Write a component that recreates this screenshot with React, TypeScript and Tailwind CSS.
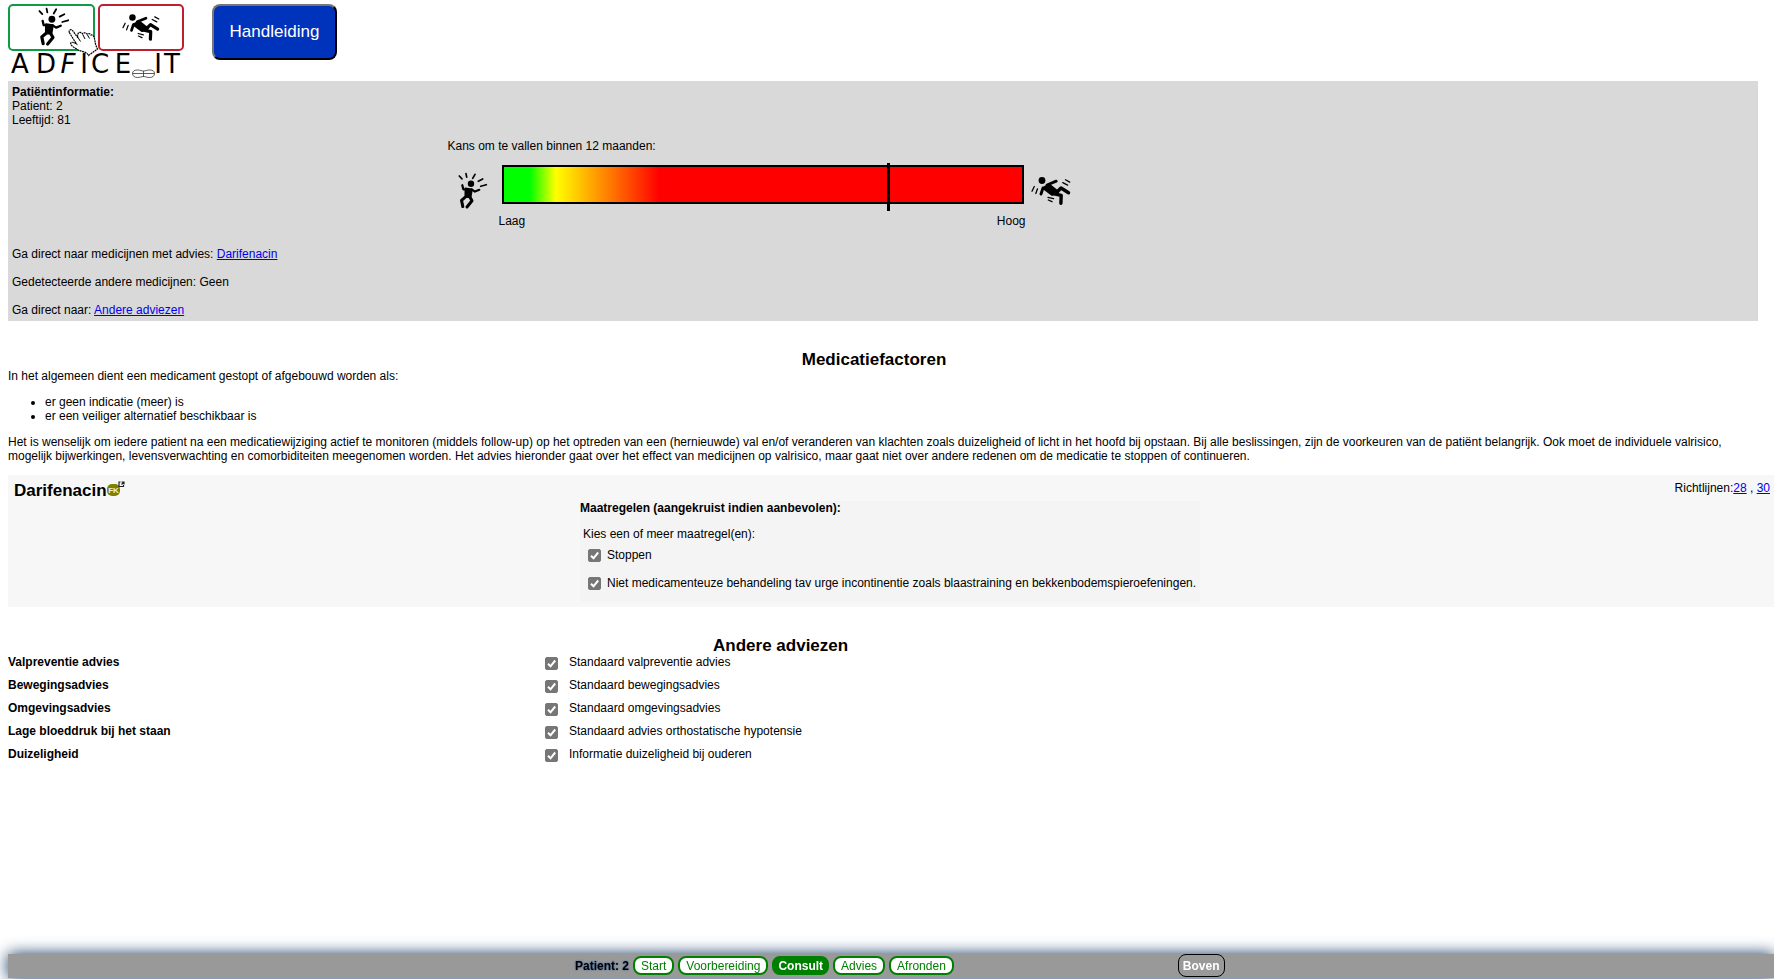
import React from "react";

function JumpingFigure(props: React.SVGProps<SVGSVGElement>) {
  return (
    <svg viewBox="0 0 31 38" fill="none" stroke="#000" strokeLinecap="round" strokeLinejoin="round" aria-hidden="true" {...props}>
      <circle cx="14" cy="11.7" r="3.2" fill="#000" stroke="none" />
      <path d="M5.3 13.200 6.300 17.300 10.300 17.500M14.500 17.300l3.500 2.300 4.300-1.800" strokeWidth="2.200" />
      <path d="M8.500 16.500 14.800 17.500 13.500 25 8.500 25z" fill="#000" strokeWidth="2" />
      <path d="M8 25.300 4.500 28.300 5.800 34.600M13 25.300 15 28.800 10 35" strokeWidth="3" />
      <path d="m2.300 4 2.700 2.800M9 1.700 9.700 5.200M18 2.300 15.700 6.300M21.300 9.300 25.700 7M23.700 14.300l5.600-1.600" strokeWidth="1.700" />
    </svg>
  );
}

function FallingFigure(props: React.SVGProps<SVGSVGElement>) {
  return (
    <svg viewBox="0 0 40 30" fill="none" stroke="#000" strokeLinecap="round" strokeLinejoin="round" aria-hidden="true" {...props}>
      <circle cx="11" cy="4.500" r="3.400" fill="#000" stroke="none" />
      <path d="M12.500 12 18 8.800 27 16 21 18.500z" fill="#000" strokeWidth="2.600" />
      <path d="M16 9 25.200 5.200M12 12 10 18" strokeWidth="2.900" />
      <path d="M25.500 16.500 30 12 37.500 16.800M22 17.500l8.200 1.800-.3 8" strokeWidth="3.400" />
      <path d="m3.300 10.500-2.300 4.700M6.500 12.800 4.800 17.500M17 21.300l5.500 1.400M17.300 24l3.700 1.700M34.500 3.800l4.200 2.300M31.800 6.600l4.800 2.500" strokeWidth="1.300" />
    </svg>
  );
}

function Logo() {
  return (
    <svg viewBox="0 0 176 76" className="h-[76px] w-44" role="img" aria-label="ADFICE_IT">
      <rect x="1" y="1" width="85" height="45" rx="4" fill="#fff" stroke="#0f9b45" strokeWidth="2" />
      <rect x="91" y="1" width="84" height="45" rx="4" fill="#fff" stroke="#bf1e2e" strokeWidth="2" />
      <JumpingFigure x="29" y="2" width="33" height="42" />
      <FallingFigure x="114" y="9" width="38" height="29" />
      <g fontFamily="'DejaVu Sans', sans-serif" fontSize="26" fill="#000" textAnchor="middle">
        <text x="12" y="69">A</text>
        <text x="38" y="69">D</text>
        <text x="60" y="69" fontStyle="italic">F</text>
        <text x="76" y="69">I</text>
        <text x="92" y="69">C</text>
        <text x="115" y="69">E</text>
        <text x="150" y="69">I</text>
        <text x="164" y="69">T</text>
      </g>
      <path
        d="M124.500 69.500c0-2.500 2-3.500 5-3.500 3 0 4 1 6 1s3-1 6-1 5 1 5 3.500-2 4-5 4-4-1-6-1-3 1-6 1-5-1.500-5-4zM124.500 69.500h22M135.500 67v6"
        fill="#fff"
        stroke="#333"
        strokeWidth="0.800"
      />
      <path
        d="M61.300 28.500c-1-2.200 1.700-4 3.200-2l5.500 7.300c-.5-1.600-.8-3 .2-4.500 1.200-1.600 3.500-1 4.600.7.800-1.700 3.400-1.500 4.300.2 1-1.200 3.200-.7 3.900.8 1.500-.3 2.700 1 3.200 2.500 1 3 .5 6 3.300 11.500L80.500 51.500c-2-4.500-8-3.500-12-6.500-2.500-1.800-5.500-3-5.800-5.500.3-1.700 2-1.700 5.600.3z"
        fill="#fff"
        stroke="#000"
        strokeWidth="1.200"
        strokeDasharray="2 0.600"
      />
      <path d="m70 33.500 2.500 4M75 31l2 4M79.500 31l2 3.500" fill="none" stroke="#000" strokeWidth="1" />
    </svg>
  );
}

function FkIcon() {
  return (
    <svg viewBox="0 0 18 16" className="h-4 w-[18px]" role="img" aria-label="Farmacotherapeutisch Kompas">
      <rect x="0" y="3" width="13" height="12" rx="5" fill="#808000" />
      <text x="6.500" y="12" textAnchor="middle" fontFamily="'Liberation Sans', sans-serif" fontSize="8" fontWeight="bold" fill="#f0f0d8">
        FK
      </text>
      <path d="M13.500 1H12v4.500h4.500V4M14.500 1h2.500v2.500M17 1l-2.500 2.500" fill="none" stroke="#222" strokeWidth="1.200" />
    </svg>
  );
}

function Tick({ id, className = "" }: { id: string; className?: string }) {
  return (
    <span className={`inline-grid shrink-0 ${className}`}>
      <input
        id={id}
        type="checkbox"
        defaultChecked
        className="peer col-start-1 row-start-1 size-[13px] appearance-none rounded-xs border border-[#767676] bg-white checked:bg-[#767676]"
      />
      <svg viewBox="0 0 13 13" className="pointer-events-none col-start-1 row-start-1 size-[13px] opacity-0 peer-checked:opacity-100" aria-hidden="true">
        <path d="m3 6.800 2.500 2.500L10.200 3.500" fill="none" stroke="#fff" strokeWidth="2" />
      </svg>
    </span>
  );
}

const link = "text-[#0000ee] underline";

const advice = [
  { id: "val", name: "Valpreventie advies", text: "Standaard valpreventie advies" },
  { id: "beweging", name: "Bewegingsadvies", text: "Standaard bewegingsadvies" },
  { id: "omgeving", name: "Omgevingsadvies", text: "Standaard omgevingsadvies" },
  { id: "bloeddruk", name: "Lage bloeddruk bij het staan", text: "Standaard advies orthostatische hypotensie" },
  { id: "duizelig", name: "Duizeligheid", text: "Informatie duizeligheid bij ouderen" },
];

const steps = ["Start", "Voorbereiding", "Consult", "Advies", "Afronden"];

function PatientPanel() {
  return (
    <section className="mr-4 bg-[#d9d9d9] px-1 pt-1 pb-1">
      <h2 className="font-bold">Patiëntinformatie:</h2>
      <p>Patient: 2</p>
      <p>Leeftijd: 81</p>
      <div className="ml-[25%] flex w-[630px] flex-col pt-3">
        <p>Kans om te vallen binnen 12 maanden:</p>
        <div className="mt-3 flex h-[46px] items-start">
          <div className="flex w-[54px] justify-center pt-[7px] pr-1">
            <JumpingFigure className="h-[38px] w-[31px]" />
          </div>
          <div className="relative h-[39px] w-[522px] border-2 border-black bg-[linear-gradient(to_right,#00ff00_5%,#ffff00_10%,#ff0000_30%)]">
            <div className="absolute -top-1 left-[74%] h-12 w-[3px] bg-black" />
          </div>
          <div className="flex w-[54px] pt-[11px] pl-[7px]">
            <FallingFigure className="h-[30px] w-10" />
          </div>
        </div>
        <div className="mt-[3px] mr-[52px] ml-[51px] flex justify-between">
          <span>Laag</span>
          <span>Hoog</span>
        </div>
      </div>
      <p className="mt-[19px]">
        Ga direct naar medicijnen met advies: <a href="#darifenacin" className={link}>Darifenacin</a>
      </p>
      <p className="mt-[14px]">Gedetecteerde andere medicijnen: Geen</p>
      <p className="mt-[14px]">
        Ga direct naar: <a href="#andere" className={link}>Andere adviezen</a>
      </p>
    </section>
  );
}

function MedicinePanel() {
  return (
    <section id="darifenacin" className="mt-3 bg-[#f7f7f7] pb-[5px]">
      <div className="flex h-[26px] items-start justify-between pr-1 pl-[6px]">
        <h3 className="flex pt-[6px] text-[17px] leading-[19px] font-bold">
          Darifenacin
          <a href="#fk"><FkIcon /></a>
        </h3>
        <p className="pt-[6px]">
          Richtlijnen:<a href="#r28" className={link}>28</a> , <a href="#r30" className={link}>30</a>
        </p>
      </div>
      <div className="ml-[572px] w-fit bg-[#f4f4f4] pr-1 pb-3">
        <h4 className="font-bold">Maatregelen (aangekruist indien aanbevolen):</h4>
        <p className="mt-3 ml-[3px]">Kies een of meer maatregel(en):</p>
        <div className="mt-[7px] ml-2 flex items-center gap-[6px]">
          <Tick id="stoppen" />
          <label htmlFor="stoppen">Stoppen</label>
        </div>
        <div className="mt-[14px] ml-2 flex items-center gap-[6px]">
          <Tick id="niet-medicamenteus" />
          <label htmlFor="niet-medicamenteus">
            Niet medicamenteuze behandeling tav urge incontinentie zoals blaastraining en bekkenbodemspieroefeningen.
          </label>
        </div>
      </div>
    </section>
  );
}

function Footer() {
  return (
    <footer className="fixed right-0 bottom-px left-2 flex h-6 items-center bg-[#999999] pb-px pl-[567px] [box-shadow:0_0_16px_#0f3462] [text-shadow:0_0_2px_#1e5aa8]">
      <span className="w-[58px] font-bold">Patient: 2</span>
      <nav className="flex gap-1 [text-shadow:none]">
        {steps.map((step) => (
          <button
            key={step}
            type="button"
            className={
              step === "Consult"
                ? "h-[19px] rounded-lg border-2 border-[#008000] bg-[#008000] px-1 leading-[14px] font-bold text-white"
                : "h-[19px] rounded-lg border-2 border-[#008000] bg-white px-[6px] leading-[14px] text-[#008000]"
            }
          >
            {step}
          </button>
        ))}
      </nav>
      <button type="button" className="ml-56 h-[23px] rounded-lg border border-black bg-[#999999] px-1 font-bold text-white">
        Boven
      </button>
    </footer>
  );
}

export default function App() {
  return (
    <div className="pt-1 pb-12 pl-2 font-['Liberation_Sans',Arial,sans-serif] text-xs leading-[14px] text-black">
      <header className="flex h-[77px] items-start gap-7">
        <Logo />
        <button type="button" className="h-14 w-[125px] rounded-lg border-2 border-t-[#767676] border-r-black border-b-black border-l-[#767676] bg-[#0033bb] text-[17px] text-white">
          Handleiding
        </button>
      </header>
      <PatientPanel />
      <main>
        <h2 className="mt-[29px] mr-[34px] text-center text-[17px] leading-[19px] font-bold">Medicatiefactoren</h2>
        <p>In het algemeen dient een medicament gestopt of afgebouwd worden als:</p>
        <ul className="my-3 list-disc pl-[37px]">
          <li>er geen indicatie (meer) is</li>
          <li>er een veiliger alternatief beschikbaar is</li>
        </ul>
        <p className="pr-4">
          Het is wenselijk om iedere patient na een medicatiewijziging actief te monitoren (middels follow-up) op het optreden van een (hernieuwde) val en/of veranderen van klachten zoals duizeligheid of licht in het hoofd bij opstaan. Bij alle beslissingen, zijn de voorkeuren van de patiënt belangrijk. Ook moet de individuele valrisico, mogelijk bijwerkingen, levensverwachting en comorbiditeiten meegenomen worden. Het advies hieronder gaat over het effect van medicijnen op valrisico, maar gaat niet over andere redenen om de medicatie te stoppen of continueren.
        </p>
        <MedicinePanel />
        <section id="andere" className="mt-[29px] w-[87.5%]">
          <h2 className="text-center text-[17px] leading-[19px] font-bold">Andere adviezen</h2>
          {advice.map((item) => (
            <div key={item.id} className="flex h-[23px] items-start">
              <h3 className="w-[537px] font-bold">{item.name}</h3>
              <Tick id={item.id} className="mt-[2px] mr-[11px]" />
              <label htmlFor={item.id}>{item.text}</label>
            </div>
          ))}
        </section>
      </main>
      <Footer />
    </div>
  );
}
